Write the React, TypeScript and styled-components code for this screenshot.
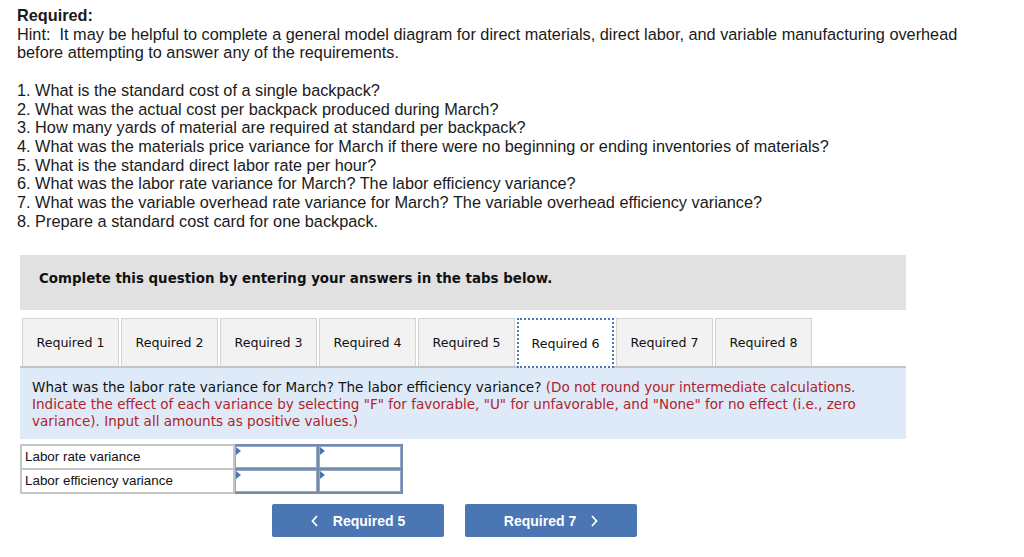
import React from 'react';
import styled, { createGlobalStyle } from 'styled-components';

const Global = createGlobalStyle`
  body {
    margin: 0;
    background: #ffffff;
    color: #1a1a1a;
  }
`;

const Page = styled.div`
  padding: 6px 0 0 17px;
  width: 1024px;
  box-sizing: border-box;
`;

const Intro = styled.div`
  font-family: 'Liberation Sans', Arial, sans-serif;
  font-size: 16.3px;
  line-height: 18.7px;
  color: #1a1a1a;
  width: 955px;
`;

const Heading = styled.div`
  font-weight: 700;
`;

const List = styled.div`
  margin-top: 18.7px;
`;

const Panel = styled.div`
  margin: 25px 0 0 3px;
  width: 886px;
`;

const Banner = styled.div`
  background: #e1e1e1;
  height: 55px;
  display: flex;
  align-items: center;
  padding: 0 19px 8px;
  box-sizing: border-box;
  font-family: 'DejaVu Sans', Verdana, sans-serif;
  font-weight: 700;
  font-size: 13.4px;
  color: #111;
`;

const Tabs = styled.div`
  display: flex;
  gap: 2px;
  margin-top: 8px;
  padding-left: 2px;
  border-bottom: 2px solid #c4c4c4;
`;

const Tab = styled.div<{ $active?: boolean }>`
  width: 97px;
  box-sizing: border-box;
  display: flex;
  align-items: center;
  justify-content: center;
  font-family: 'DejaVu Sans', Verdana, sans-serif;
  font-size: 12.6px;
  color: #111;
  background: ${(p) => (p.$active ? '#ffffff' : '#f2f2f2')};
  border: ${(p) => (p.$active ? '2px dotted #4a76b4' : '1px solid #d3d3d3')};
  border-bottom: ${(p) => (p.$active ? '2px dotted #4a76b4' : 'none')};
  margin-bottom: ${(p) => (p.$active ? '-2px' : '0')};
  height: ${(p) => (p.$active ? '50px' : '48px')};
`;

const Question = styled.div`
  background: #deeaf7;
  padding: 11px 12px 10px 12px;
  font-family: 'DejaVu Sans', Verdana, sans-serif;
  font-size: 13.55px;
  line-height: 16.6px;
  color: #111;
`;

const Note = styled.span`
  color: #b1232a;
`;

const Table = styled.table`
  margin-top: 5px;
  border-collapse: collapse;
  font-family: 'Liberation Sans', Arial, sans-serif;
  font-size: 13.4px;
  line-height: 16px;
  color: #111;
`;

const LabelCell = styled.td`
  width: 205px;
  height: 22px;
  padding: 0 3px;
  border: 2px solid #c6c6c6;
`;

const InputCell = styled.td`
  position: relative;
  width: 82px;
  height: 22px;
  padding: 0;
  border: 2px solid #7a8aa3;
  box-shadow: inset 0 0 0 1px #8fa9d0;
  background: #fff;
`;

const Flag = styled.span`
  position: absolute;
  left: 1px;
  top: 1px;
  width: 0;
  height: 0;
  border-top: 4px solid transparent;
  border-bottom: 4px solid transparent;
  border-left: 5px solid #4a76b4;
`;

const Nav = styled.div`
  display: flex;
  gap: 21px;
  margin: 10px 0 0 252px;
`;

const NavButton = styled.div`
  width: 172px;
  height: 33px;
  background: #4a76b4;
  border-radius: 2px;
  display: flex;
  align-items: center;
  justify-content: center;
  gap: 14px;
  color: #fff;
  font-family: 'Liberation Sans', Arial, sans-serif;
  font-weight: 700;
  font-size: 14px;
`;

const Chevron = ({ dir }: { dir: 'left' | 'right' }) => (
  <svg width="8" height="12" viewBox="0 0 8 12">
    <path
      d={dir === 'left' ? 'M6 1 L1.5 6 L6 11' : 'M2 1 L6.5 6 L2 11'}
      fill="none"
      stroke="#fff"
      strokeWidth="1.8"
    />
  </svg>
);

const questions = [
  '1. What is the standard cost of a single backpack?',
  '2. What was the actual cost per backpack produced during March?',
  '3. How many yards of material are required at standard per backpack?',
  '4. What was the materials price variance for March if there were no beginning or ending inventories of materials?',
  '5. What is the standard direct labor rate per hour?',
  '6. What was the labor rate variance for March? The labor efficiency variance?',
  '7. What was the variable overhead rate variance for March? The variable overhead efficiency variance?',
  '8. Prepare a standard cost card for one backpack.',
];

const rows = ['Labor rate variance', 'Labor efficiency variance'];

export default function App() {
  return (
    <>
      <Global />
      <Page>
        <Intro>
          <Heading>Required:</Heading>
          <div>
            Hint:&nbsp; It may be helpful to complete a general model diagram for direct materials, direct labor, and
            variable manufacturing overhead before attempting to answer any of the requirements.
          </div>
          <List>
            {questions.map((q) => (
              <div key={q}>{q}</div>
            ))}
          </List>
        </Intro>
        <Panel>
          <Banner>Complete this question by entering your answers in the tabs below.</Banner>
          <Tabs>
            {[1, 2, 3, 4, 5, 6, 7, 8].map((n) => (
              <Tab key={n} $active={n === 6}>
                Required {n}
              </Tab>
            ))}
          </Tabs>
          <Question>
            What was the labor rate variance for March? The labor efficiency variance?{' '}
            <Note>
              (Do not round your intermediate calculations. Indicate the effect of each variance by selecting "F" for
              favorable, "U" for unfavorable, and "None" for no effect (i.e., zero variance). Input all amounts as
              positive values.)
            </Note>
          </Question>
          <Table>
            <tbody>
              {rows.map((r) => (
                <tr key={r}>
                  <LabelCell>{r}</LabelCell>
                  <InputCell>
                    <Flag />
                  </InputCell>
                  <InputCell>
                    <Flag />
                  </InputCell>
                </tr>
              ))}
            </tbody>
          </Table>
          <Nav>
            <NavButton>
              <Chevron dir="left" />
              Required 5
            </NavButton>
            <NavButton>
              Required 7
              <Chevron dir="right" />
            </NavButton>
          </Nav>
        </Panel>
      </Page>
    </>
  );
}
